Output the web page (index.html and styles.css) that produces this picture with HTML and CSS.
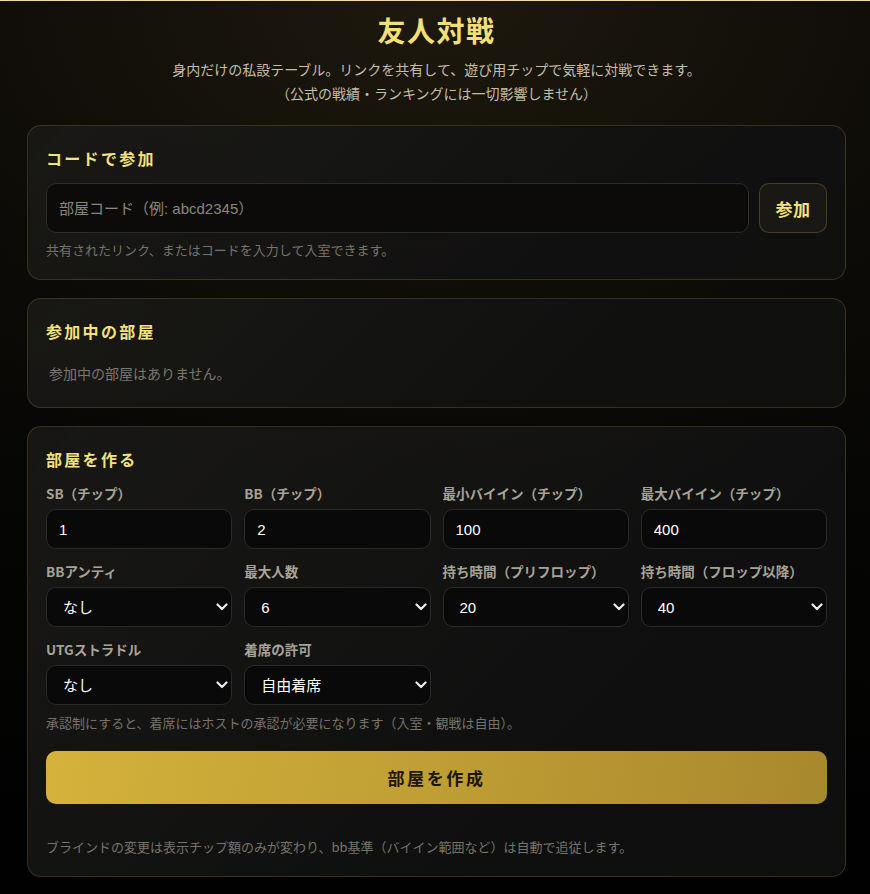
FILE: index.html
```html
<!DOCTYPE html>
<html lang="ja">
<head>
  <meta charset="UTF-8">
  <meta name="viewport" content="width=device-width, initial-scale=1.0">
  <title>友人対戦</title>
  <link rel="stylesheet" href="styles.css">
</head>
<body>

<div class="page">
  <header class="hero">
    <h1>友人対戦</h1>
    <p class="lead">身内だけの私設テーブル。リンクを共有して、遊び用チップで気軽に対戦できます。<br>（公式の戦績・ランキングには一切影響しません）</p>
  </header>

  <section class="card">
    <h2>コードで参加</h2>
    <div class="join-row">
      <input type="text" class="field join-input" id="roomCode" placeholder="部屋コード（例: abcd2345）">
      <button class="join-btn" onclick="joinRoom()">参加</button>
    </div>
    <p class="hint">共有されたリンク、またはコードを入力して入室できます。</p>
  </section>

  <section class="card">
    <h2>参加中の部屋</h2>
    <p class="empty" id="myRooms">参加中の部屋はありません。</p>
  </section>

  <section class="card">
    <h2>部屋を作る</h2>
    <div class="settings">
      <div class="form-group">
        <label for="sb">SB（チップ）</label>
        <input type="text" class="field" id="sb" value="1">
      </div>
      <div class="form-group">
        <label for="bb">BB（チップ）</label>
        <input type="text" class="field" id="bb" value="2">
      </div>
      <div class="form-group">
        <label for="minBuyin">最小バイイン（チップ）</label>
        <input type="text" class="field" id="minBuyin" value="100">
      </div>
      <div class="form-group">
        <label for="maxBuyin">最大バイイン（チップ）</label>
        <input type="text" class="field" id="maxBuyin" value="400">
      </div>

      <div class="form-group">
        <label for="ante">BBアンティ</label>
        <div class="select-wrap">
          <select class="field" id="ante">
            <option>なし</option>
            <option>1BB</option>
          </select>
          <svg class="chevron" viewBox="0 0 12 8"><path d="M1.5 1.5 6 6l4.5-4.5"/></svg>
        </div>
      </div>
      <div class="form-group">
        <label for="seats">最大人数</label>
        <div class="select-wrap">
          <select class="field" id="seats">
            <option>2</option>
            <option selected>6</option>
            <option>9</option>
          </select>
          <svg class="chevron" viewBox="0 0 12 8"><path d="M1.5 1.5 6 6l4.5-4.5"/></svg>
        </div>
      </div>
      <div class="form-group">
        <label for="timePre">持ち時間（プリフロップ）</label>
        <div class="select-wrap">
          <select class="field" id="timePre">
            <option>15</option>
            <option selected>20</option>
            <option>30</option>
          </select>
          <svg class="chevron" viewBox="0 0 12 8"><path d="M1.5 1.5 6 6l4.5-4.5"/></svg>
        </div>
      </div>
      <div class="form-group">
        <label for="timePost">持ち時間（フロップ以降）</label>
        <div class="select-wrap">
          <select class="field" id="timePost">
            <option>30</option>
            <option selected>40</option>
            <option>60</option>
          </select>
          <svg class="chevron" viewBox="0 0 12 8"><path d="M1.5 1.5 6 6l4.5-4.5"/></svg>
        </div>
      </div>

      <div class="form-group">
        <label for="straddle">UTGストラドル</label>
        <div class="select-wrap">
          <select class="field" id="straddle">
            <option>なし</option>
            <option>あり</option>
          </select>
          <svg class="chevron" viewBox="0 0 12 8"><path d="M1.5 1.5 6 6l4.5-4.5"/></svg>
        </div>
      </div>
      <div class="form-group">
        <label for="seating">着席の許可</label>
        <div class="select-wrap">
          <select class="field" id="seating">
            <option>自由着席</option>
            <option>承認制</option>
          </select>
          <svg class="chevron" viewBox="0 0 12 8"><path d="M1.5 1.5 6 6l4.5-4.5"/></svg>
        </div>
      </div>
    </div>
    <p class="note">承認制にすると、着席にはホストの承認が必要になります（入室・観戦は自由）。</p>
    <button class="create-btn" onclick="createRoom()">部屋を作成</button>
    <p class="note footer-note">ブラインドの変更は表示チップ額のみが変わり、bb基準（バイイン範囲など）は自動で追従します。</p>
  </section>
</div>

<script>
  function joinRoom() {
    const code = document.getElementById('roomCode').value.trim();
    if (code) {
      location.hash = 'room/' + encodeURIComponent(code);
    }
  }

  function createRoom() {
    const sb = Number(document.getElementById('sb').value);
    const bb = Number(document.getElementById('bb').value);
    if (!sb || !bb || bb < sb) {
      alert('ブラインドの値を確認してください。');
    }
  }
</script>

</body>
</html>
```

FILE: styles.css
```css
* {
  box-sizing: border-box;
}
html {
  background: #000;
}
body {
  margin: 0;
  min-height: 894px;
  border-top: 1px solid #f6d9a6;
  font-family: "Noto Sans CJK JP", "Noto Sans", sans-serif;
  color: #ddd;
  background:
    radial-gradient(ellipse 90% 55% at 50% 0%, #1d190e 0%, #0d0b07 70%, rgba(0, 0, 0, 0) 100%),
    linear-gradient(180deg, #0e0c08 0%, #050504 60%, #000 100%);
}
.page {
  padding: 0 24px 18px 27px;
}
.hero {
  text-align: center;
  padding-top: 9px;
}
.hero h1 {
  margin: 0;
  font-size: 28px;
  line-height: 40px;
  font-weight: 700;
  letter-spacing: 1.5px;
  color: #f3df76;
}
.lead {
  margin: 7px 0 20px;
  font-size: 14px;
  line-height: 24px;
  color: #c6bea8;
}
.card {
  margin-bottom: 18px;
  padding: 20px 18px;
  border: 1px solid rgba(196, 160, 60, 0.22);
  border-radius: 14px;
  background:
    linear-gradient(135deg, rgba(255, 236, 180, 0.035), rgba(0, 0, 0, 0) 70%),
    rgba(17, 17, 17, 0.88);
}
.card h2 {
  margin: 0 0 13px;
  font-size: 16px;
  line-height: 24px;
  font-weight: 700;
  letter-spacing: 2.3px;
  color: #f5e27c;
}
.field {
  width: 100%;
  height: 40px;
  padding: 0 12px;
  border: 1px solid #2b2a28;
  border-radius: 10px;
  background: #090909;
  color: #fff;
  font-family: "Liberation Sans", "Noto Sans CJK JP", sans-serif;
  font-size: 15px;
  outline: none;
}
.field::placeholder {
  color: #8a877e;
}
.join-row {
  display: flex;
  gap: 10px;
}
.join-input {
  flex: 1;
  height: 50px;
  background: #0c0b09;
  border-color: #2e2c27;
}
.join-btn {
  width: 68px;
  height: 50px;
  border: 1px solid rgba(196, 160, 60, 0.28);
  border-radius: 10px;
  background: #191814;
  color: #f5e27c;
  font-family: "Noto Sans CJK JP", sans-serif;
  font-size: 17px;
  font-weight: 700;
  letter-spacing: 0.5px;
}
.hint,
.note {
  margin: 8px 0 0;
  font-size: 13px;
  line-height: 18px;
  color: #77736a;
}
.empty {
  margin: 0;
  padding: 7px 3px 4px;
  font-size: 14px;
  line-height: 20px;
  color: #7b776e;
}
.settings {
  display: grid;
  grid-template-columns: repeat(4, 1fr);
  column-gap: 12px;
  row-gap: 13px;
}
.form-group label {
  display: block;
  margin-bottom: 6px;
  font-size: 13.5px;
  line-height: 19px;
  font-weight: 700;
  color: #a7a397;
}
.select-wrap {
  position: relative;
}
.select-wrap select {
  appearance: none;
  -webkit-appearance: none;
  padding-left: 16px;
  padding-right: 28px;
}
.chevron {
  position: absolute;
  right: 4px;
  top: 16px;
  width: 12px;
  height: 8px;
  fill: none;
  stroke: #ececec;
  stroke-width: 2.2;
  stroke-linecap: round;
  stroke-linejoin: round;
  pointer-events: none;
}
.note {
  margin-top: 9px;
}
.create-btn {
  display: block;
  width: 100%;
  height: 53px;
  margin-top: 19px;
  border: none;
  border-radius: 10px;
  background: linear-gradient(100deg, #d5b23b 0%, #bf9e34 50%, #a8882d 100%);
  color: #1c1506;
  font-family: "Noto Sans CJK JP", sans-serif;
  font-size: 17px;
  font-weight: 700;
  letter-spacing: 2.6px;
}
.footer-note {
  margin-top: 34px;
}
```
